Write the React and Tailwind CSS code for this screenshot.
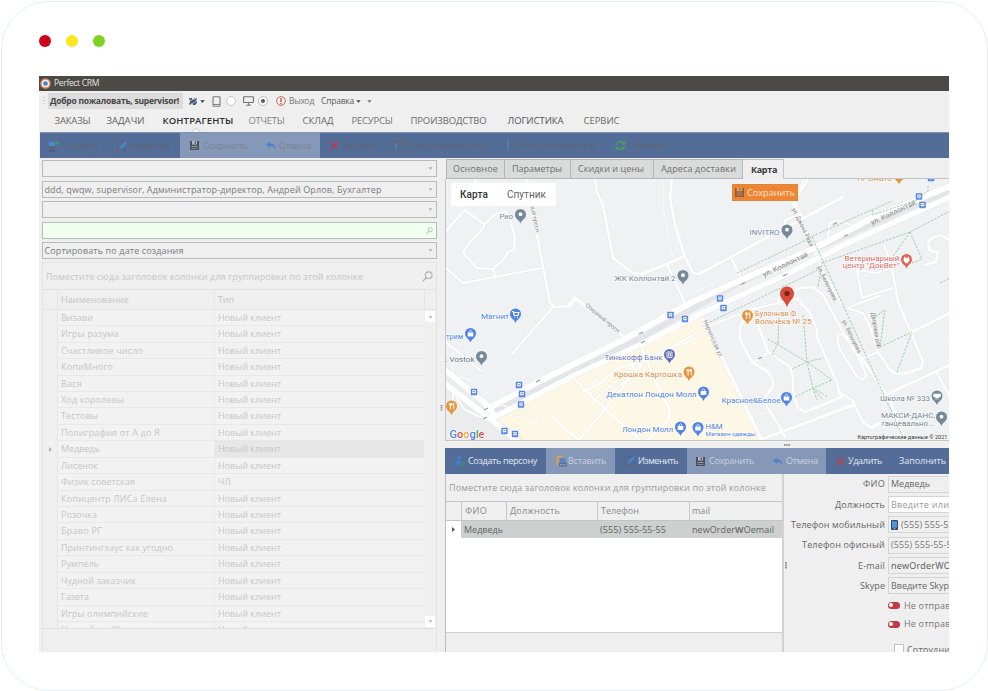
import React, { useLayoutEffect, useRef } from "react";

/* Text run spread over an exact width. */
function T({ w, className = "", children }) {
  const ref = useRef(null);
  useLayoutEffect(() => {
    const el = ref.current;
    el.style.letterSpacing = "0px";
    const natural = el.getBoundingClientRect().width;
    const n = el.textContent.length;
    if (w && n) el.style.letterSpacing = (w - natural) / n + "px";
  }, [w, children]);
  return (
    <span ref={ref} className={"inline-block shrink-0 whitespace-pre " + className}>
      {children}
    </span>
  );
}

/* ---------- icons ---------- */
const Save = ({ c = "#4c4f55" }) => (
  <svg className="h-[11px] w-[11px] shrink-0" viewBox="0 0 11 11">
    <path d="M1 1h9v9H1z" fill={c} />
    <path d="M3 1h5v3.600H3z" fill="#aeb7c6" />
    <path d="M5.600 1.500h1.300v2.300H5.600z" fill={c} />
    <path d="M2.400 6h6.200v.9H2.400zM2.400 8h6.200v.8H2.400z" fill="#8f9bb0" />
  </svg>
);
const Undo = () => (
  <svg className="h-[9px] w-[10px] shrink-0" viewBox="0 0 10 9">
    <path d="M0 3.600 4 .5v2c3.600 0 5.500 1.800 5.500 5.500C8.200 6 6.800 5 4 5v2z" fill="#4b83cc" />
  </svg>
);
const Cross = () => (
  <svg className="h-[9px] w-[9px] shrink-0" viewBox="0 0 9 9">
    <path d="M1 1l7 7M8 1L1 8" stroke="#bd3b4a" strokeWidth="1.500" />
  </svg>
);
const Edit = () => (
  <svg className="h-[12px] w-[12px] shrink-0" viewBox="0 0 12 12">
    <path d="M9.500 7v3.500h-8v-9h6" fill="none" stroke="#5d6470" strokeWidth="1" />
    <path d="M4 8.800l.6-2.200L9.400 1.600l1.500 1.500L6.200 8.100z" fill="#3f8bd8" />
  </svg>
);
const Create = () => (
  <svg className="h-[12px] w-[12px] shrink-0" viewBox="0 0 12 12">
    <path d="M1 2h6v4H1z" fill="#4a8bd0" />
    <path d="M1 6h6.500v3.500H1z" fill="#5c6678" />
    <path d="M2 10.800h2M5 10.800h2" stroke="#3b4352" />
    <path d="M9.500 1v4M7.500 3h4" stroke="#3f9a62" strokeWidth="2" />
  </svg>
);
const Person = () => (
  <svg className="h-[12px] w-[12px] shrink-0" viewBox="0 0 12 12">
    <circle cx="5" cy="3" r="2.200" fill="#3f7fc9" />
    <path d="M.5 10c0-3 2-4.300 4.500-4.300 1.600 0 2.500.5 3.200 1.300L6 10z" fill="#3f7fc9" />
    <circle cx="8.800" cy="9" r="2" fill="none" stroke="#3f8a62" strokeWidth="1.200" />
  </svg>
);
const Legal = () => (
  <svg className="h-[11px] w-[12px] shrink-0" viewBox="0 0 12 11">
    <path d="M.5.500h11v10H.5z" fill="none" stroke="#606773" />
    <path d="M1 2.500h10M5.500 1v9" stroke="#606773" />
    <path d="M3 3.500v6" stroke="#4a90d8" strokeWidth="1.500" strokeDasharray="1.500 .8" />
  </svg>
);
const Types = () => (
  <svg className="h-[11px] w-[11px] shrink-0" viewBox="0 0 11 11">
    <path d="M3 .5v10" stroke="#4a90d8" strokeWidth="1.500" strokeDasharray="2 1" />
    <path d="M5.500 1.500h5M5.500 4.500h5M5.500 7.500h5M5.500 10h5M.5.500v10" stroke="#606876" />
  </svg>
);
const Refresh = () => (
  <svg className="h-[11px] w-[11px] shrink-0" viewBox="0 0 11 11">
    <path d="M1.500 5A4 4 0 0 1 8.500 3M9.500 6A4 4 0 0 1 2.500 8" fill="none" stroke="#4a9c66" strokeWidth="1.800" />
    <path d="M10.500 0v4.500H6zM.5 11V6.500H5z" fill="#4a9c66" />
  </svg>
);
const Paste = () => (
  <svg className="h-[12px] w-[11px] shrink-0" viewBox="0 0 11 12">
    <path d="M.5 1.500h2v9h-2z" fill="#e09a48" />
    <path d="M1.500.5h5v1.800h-5z" fill="#e0a25c" />
    <path d="M4 3h4l2 2v3H4z" fill="#5d82bd" />
    <path d="M3 8h8v3.500H3z" fill="#5a6d94" />
    <path d="M4 9.700h6" stroke="#9fb0cc" strokeDasharray="1.500 .7" />
  </svg>
);
const Lens = ({ className }) => (
  <svg className={className} viewBox="0 0 11 11">
    <circle cx="6.700" cy="4.200" r="3.300" fill="none" stroke="currentColor" strokeWidth="1.200" />
    <path d="M4.300 6.700L.8 10.200" stroke="currentColor" strokeWidth="1.500" />
  </svg>
);
const Down = ({ className = "text-[#b3b3b3]" }) => (
  <svg className={"h-[3px] w-[5px] shrink-0 " + className} viewBox="0 0 5 3">
    <path d="M.3.300h4.400L2.500 2.700z" fill="currentColor" />
  </svg>
);

/* ---------- header ---------- */
function TopRows() {
  const tabs = [
    ["ЗАКАЗЫ", 36, "w-[52px]", "text-[#696969]"],
    ["ЗАДАЧИ", 38, "w-[56px]", "text-[#5f5f5f]"],
    ["КОНТРАГЕНТЫ", 71, "w-[86px]", "font-semibold text-[#303030]"],
    ["ОТЧЕТЫ", 36, "w-[54px]", "text-[#828282]"],
    ["СКЛАД", 31, "w-[49px]", "text-[#696969]"],
    ["РЕСУРСЫ", 41, "w-[59px]", "text-[#747474]"],
    ["ПРОИЗВОДСТВО", 76, "w-[97px]", "text-[#6a6a6a]"],
    ["ЛОГИСТИКА", 56, "w-[76px]", "text-[#555]"],
    ["СЕРВИС", 36, "w-[40px]", "text-[#696969]"],
  ];
  return (
    <>
      <div className="flex h-[15px] shrink-0 items-center bg-[#4b4a47] pb-[1px] pl-[1px] text-[8.5px] text-[#e6e6e6]">
        <svg className="mr-[3px] h-[11px] w-[11px]" viewBox="0 0 11 11">
          <circle cx="5.500" cy="5.500" r="5.300" fill="#df8750" />
          <circle cx="5.500" cy="5.500" r="3.800" fill="#f3f0f4" />
          <circle cx="5.500" cy="5.500" r="2.300" fill="#427fce" />
        </svg>
        <T w={45}>Perfect CRM</T>
      </div>
      <div className="flex h-[20px] shrink-0 items-center pl-[4px] text-[8.5px] text-[#5c5c5c]">
        <svg className="mr-[3px] h-[9px] w-[2px]" viewBox="0 0 2 9">
          <path d="M1 0v9" stroke="#aaa" strokeDasharray="1 2" />
        </svg>
        <div className="flex h-[16px] w-[135px] items-center bg-[#dcdcdc] pl-[2px] font-bold text-[#444]">
          <T w={129}>Добро пожаловать, supervisor!</T>
        </div>
        <svg className="ml-[5px] h-[9px] w-[10px]" viewBox="0 0 11 10">
          <path d="M1 1h3l1.500 2L7 1.500h3L9 4l1 2.500-2 2.500H5.500l-1-2-1.500 1.500-2-.500L2.500 5z" fill="#405875" />
          <path d="M1 4l8-2M3 8l6-3" stroke="#d9e3ea" strokeWidth=".7" />
        </svg>
        <Down className="ml-[2px] text-[#333]" />
        <svg className="ml-[7px] h-[11px] w-[9px]" viewBox="0 0 9 11">
          <rect x="1" y=".8" width="7" height="9.400" rx=".8" fill="none" stroke="#777" strokeWidth="1.100" />
          <path d="M1 8.500h7" stroke="#777" strokeWidth=".9" />
        </svg>
        <span className="ml-[5px] h-[10px] w-[10px] rounded-full border border-[#c6c6c6] bg-white" />
        <svg className="ml-[7px] h-[10px] w-[11px]" viewBox="0 0 11 10">
          <rect x=".6" y=".8" width="9.800" height="5.700" rx=".5" fill="none" stroke="#707070" strokeWidth="1.100" />
          <path d="M5.500 6.500v2.500M3 9.200h5" stroke="#777" />
        </svg>
        <span className="ml-[4px] flex h-[10px] w-[10px] items-center justify-center rounded-full border border-[#bbb] bg-white">
          <span className="h-[4px] w-[4px] rounded-full bg-[#555]" />
        </span>
        <svg className="ml-[8px] h-[10px] w-[10px]" viewBox="0 0 10 10">
          <circle cx="5" cy="5" r="4.300" fill="#fff2f0" stroke="#cf5c5c" strokeWidth="1" />
          <path d="M5 2v4M5 7v1.200" stroke="#cc4040" strokeWidth="1.300" />
        </svg>
        <T w={25} className="ml-[3px] text-[#777]">Выход</T>
        <T w={33} className="ml-[7px]">Справка</T>
        <Down className="ml-[2px] text-[#444]" />
        <Down className="ml-[6px] text-[#777]" />
      </div>
      <div className="relative flex h-[21px] shrink-0 items-center pl-[15.500px] text-[9.500px]">
        {tabs.map(([t, w, box, cls]) => (
          <div key={t} className={"flex shrink-0 " + box + " " + cls}>
            <T w={w}>{t}</T>
          </div>
        ))}
        <svg className="absolute bottom-0 left-[152px] h-[5px] w-[10px]" viewBox="0 0 10 5">
          <path d="M.5 5L5 .7 9.500 5" fill="#f6f6f6" stroke="#c3c3c3" strokeWidth=".8" />
        </svg>
      </div>
    </>
  );
}

function MainToolbar() {
  return (
    <div className="ml-[1px] flex h-[26px] shrink-0 border-t border-[#8493b0] bg-[#536c98] text-[9px] text-[#5f6774]">
      <div className="flex w-[140px] items-center pl-[8px]">
        <Create /><T w={36} className="ml-[3px]">Создать</T>
        <div className="w-[17px]" />
        <Edit /><T w={40} className="ml-[2px]">Изменить</T>
      </div>
      <div className="flex w-[140px] items-center bg-[#8698b8] pl-[9px] text-[#7b8595]">
        <Save /><T w={44} className="ml-[3px]">Сохранить</T>
        <div className="w-[19px]" />
        <Undo /><T w={32} className="ml-[3px]">Отмена</T>
      </div>
      <div className="flex items-center pl-[10px]">
        <Cross /><T w={33} className="ml-[4px]">Удалить</T>
        <div className="w-[17px]" />
        <Legal /><T w={80} className="ml-[2px]">Юридические лица</T>
        <div className="w-[18px]" />
        <Types /><T w={78} className="ml-[3px]">Типы контрагентов</T>
        <div className="w-[18px]" />
        <Refresh /><T w={39} className="ml-[3px]">Обновить</T>
      </div>
    </div>
  );
}

/* ---------- left panel ---------- */
const CLIENTS = [
  ["Визави", 32], ["Игры разума", 58], ["Счастливое число", 82], ["КопиМного", 52], ["Вася", 21],
  ["Ход королевы", 63], ["Тестовы", 37], ["Полиграфия от А до Я", 99], ["Медведь", 39], ["Лисенок", 37],
  ["Физик советская", 74], ["Копицентр ЛИСа Елена", 106], ["Розочка", 36], ["Браво РГ", 41],
  ["Принтингхаус как угодно", 112], ["Румпель", 38], ["Чудной заказчик", 75], ["Газета", 28],
  ["Игры олимпийские", 87], ["Новая база Юг", 63],
];

function Field({ text, w, green }) {
  return (
    <div className={"flex h-[17px] w-[395px] items-center border border-[#b9bbba] pl-[1.500px] pr-[3px] " + (green ? "bg-[#f1fff0]" : "bg-[#efefef]")}>
      {text && <T w={w} className="text-[9px] text-[#7b7b7b]">{text}</T>}
      <span className="flex-1" />
      {green ? <Lens className="h-[7px] w-[7px] text-[#aab5aa]" /> : <Down />}
    </div>
  );
}

function LeftPanel() {
  return (
    <div className="flex w-[398px] shrink-0 flex-col pl-[3px] pt-[2.400px]">
      <div className="flex flex-col gap-[3.400px]">
        <Field />
        <Field text="ddd, qwqw, supervisor, Администратор-директор, Андрей Орлов, Бухгалтер" w={337} />
        <Field />
        <Field green />
        <Field text="Сортировать по дате создания" w={139} />
      </div>
      <div className="mt-[3px] flex min-h-0 flex-1 flex-col border-x border-t border-[#e4e4e4] text-[9px] text-[#c6c6c6]">
        <div className="flex h-[27px] shrink-0 items-center justify-between border-b border-[#e2e2e2] pl-[3px] pr-[3px] pt-[1px]">
          <T w={317}>Поместите сюда заголовок колонки для группировки по этой колонке</T>
          <Lens className="h-[11px] w-[11px] text-[#b4b4b4]" />
        </div>
        <div className="flex h-[20px] shrink-0 border-b border-[#e4e4e4]">
          <div className="w-[15px] border-r border-[#e4e4e4]" />
          <div className="flex w-[157px] items-center border-r border-[#e4e4e4] pl-[3px]"><T w={68}>Наименование</T></div>
          <div className="flex w-[210px] items-center border-r border-[#e4e4e4] pl-[3px]"><T w={16}>Тип</T></div>
        </div>
        <div className="flex h-[319px] shrink-0 overflow-hidden border-b border-[#e0e0e0]">
          <div className="w-[381px] overflow-hidden">
            {CLIENTS.map(([name, w], i) => (
              <div key={name} className="flex h-[16.430px] w-full">
                <div className="flex w-[15px] shrink-0 items-center justify-center border-r border-[#e6e6e6]">
                  {i === 8 && (
                    <svg className="h-[5px] w-[3px]" viewBox="0 0 3 5"><path d="M0 0l3 2.500L0 5z" fill="#b0b0b0" /></svg>
                  )}
                </div>
                <div className="flex w-[157px] shrink-0 items-center border-b border-r border-[#e8e8e8] bg-[#f2f2f2] pl-[3px]"><T w={w}>{name}</T></div>
                <div className={"flex w-[209px] shrink-0 items-center border-b border-[#e8e8e8] pl-[3px] " + (i === 8 ? "bg-[#e7e7e7]" : "bg-[#f2f2f2]")}>
                  <T w={i === 10 ? 13 : 63}>{i === 10 ? "ЧЛ" : "Новый клиент"}</T>
                </div>
              </div>
            ))}
          </div>
          <div className="flex flex-1 flex-col items-center justify-between pb-[1px] pt-[1px]">
            <span className="flex h-[11px] w-[10px] items-center justify-center bg-white"><Down className="rotate-180 text-[#bbb]" /></span>
            <span className="flex h-[11px] w-[10px] items-center justify-center bg-white"><Down className="text-[#bbb]" /></span>
          </div>
        </div>
      </div>
    </div>
  );
}

/* ---------- map ---------- */
const ROADS = [
  ["446,231 465,210 484,224 484,227", 2.2],
  ["484,225 495,214 505,211.500 510,217 512,227 515,238 514,250 508,252 503,260 493,269 477,268 463,253 467,246 484,227", 2.2],
  ["493,269 495,276", 2.2],
  ["446,268 463,283 542,268", 2.2],
  ["475,179 476,187", 2.2],
  ["527,179 537,235 550,303 555,307 570,306 575,299 625,338", 2.4],
  ["568,305 575,297 588,308", 2],
  ["553,307 513,353", 2.2],
  ["595,179 597,192 603,205 613,258 633,273 642,274 667,264 685,256", 2.6],
  ["672,179 670,198 675,225 685,257 693,273 699,274 787,227 843,197", 2.6],
  ["663,179 663,208 673,258", 1],
  ["667,264 687,308", 2.2],
  ["683,298 730,275", 1],
  ["808,179 800,192 792,202 815,250 823,272 842,305", 2.6],
  ["804,179 799,190", 1.6],
  ["793,199 802,217", 2.2],
  ["786,232 785,220 801,214", 2.2],
  ["732,260 743,283", 2.6],
  ["828,237 830,223 840,220 858,228 832,237", 2.2],
  ["949,240 941,235 933,237 928,242 930,251 938,252 936,262 924,265", 2.6],
  ["857,270 877,273 892,268 884,245", 2.2],
  ["892,268 898,302 910,330 923,362 921,368 907,373 896,374 890,370 878,352 863,358", 2.4],
  ["857,270 862,298 892,288", 2.2],
  ["780,305 778,298 800,288 813,287 823,295 847,340 863,360 890,400 905,440", 2.6],
  ["703,320 733,380 762,441", 3.6],
  ["704,328 753,309 800,298", 2.2],
  ["750,310 740,327 740,340 753,363 767,371 773,380 773,387 765,397 767,407 780,427 785,437", 2.6],
  ["768,352 753,363", 2.2],
  ["758,325 768,352 790,367 793,377 793,390 797,407 805,412 842,397 838,392", 2.6],
  ["798,300 810,313 817,330 817,337 837,383 840,393 852,400 863,422 871,428 882,422", 2.6],
  ["853,405 760,440", 3],
  ["837,337 840,350 856,375 862,380 866,376 863,366 847,337 841,334 837,337", 2.2],
  ["878,352 870,327 863,313 847,308 879,296", 2.2],
  ["887,394 950,365", 2.6],
  ["937,373 950,397", 2.2],
  ["912,332 950,313", 2.6],
  ["929,325 937,337 950,341", 1],
  ["905,372 936,330", 0.8],
  ["733,372 746,366", 1.2],
  ["755,417 767,412", 1],
  ["446,342 481,371", 2.2],
  ["453,352 453,376 473,380", 1.3],
  ["454,394 465,410 487,420 500,430", 1.8],
  ["453,389 453,405", 1.8],
];
const YELLOW_ROADS = [
  ["573,378 605,409 641,441", 2.6],
  ["553,418 579,440 605,409 641,365", 2.6],
  ["583,391 596,386 618,368 634,364 640,364 697,333", 2.4],
  ["584,391 594,386 596,378", 2.2],
  ["595,399 634,366", 2.2],
  ["600,404 641,367", 2.2],
  ["640,345 652,373 670,410 668,420 648,441", 3],
  ["640,360 698,338", 1.5],
  ["502,405 541,418", 1],
  ["505,415 535,418", 1],
];
const HIGHWAYS = [
  ["487,409 540,381 623,340 690,303 743,279 815,248 870,219 950,186", 6],
  ["497,416 573,376 640,345 700,314 783,276 850,242 950,197", 5.5],
  ["444,369 487,405 495,417", 6],
  ["444,383 497,424 518,441", 6],
];
const WALKS = [
  "737,273 800,243 815,235 892,201", "872,210 873,215 917,200 928,191 928,186", "950,211 910,232 822,263 818,287",
  "910,232 892,258", "910,232 922,259 912,263", "812,237 843,305 903,437", "710,322 818,270", "940,283 950,278",
  "778,343 779,317", "768,339 807,362 823,358", "803,315 807,362 813,388 832,380 807,362 792,369",
  "795,397 813,388 828,397", "813,388 817,400", "813,388 823,400", "778,343 772,355",
  "875,317 885,310 880,347 912,332 897,372",
];

function Pin({ x, y, c, kind }) {
  return (
    <g transform={`translate(${x} ${y})`}>
      <path d="M0 8.500C-.8 5-5.500 3.800-5.500-.6A5.500 5.500 0 0 1 5.500-.6C5.500 3.800.8 5 0 8.500z" fill={c} />
      {kind === "food" && <path d="M-2-3.500v2.200h2.200v-2.200M-.9-3.500V3M2.300-3.500V3M1.800-3.500v3" stroke="#fff" strokeWidth=".9" fill="none" />}
      {kind === "bag" && <><path d="M-2.800-1.500h5.600V2.500h-5.600z" fill="#fff" /><path d="M-1.300-1.500c0-3 2.600-3 2.600 0" fill="none" stroke="#fff" strokeWidth=".8" /></>}
      {kind === "cart" && <path d="M-3.500-3h1.300L-1.300 1H2.500L3.300-2h-5M-1 2.800h.8M1.700 2.800h.8" fill="none" stroke="#fff" strokeWidth="1.200" />}
      {kind === "bank" && <path d="M-2.500-3h5v5.500h-5zM-1-1.500h2V1h-2z" fill="none" stroke="#fff" strokeWidth=".8" />}
      {kind === "vet" && <path d="M-2.500-2h5v3L1 2.800h-2L-2.500 1zM-2-3.500V-2M2-3.500V-2" fill="#fff" stroke="#fff" strokeWidth=".7" />}
      {kind === "school" && <path d="M-3.500-2.500h7V0L0 1.500-3.500 0zM-2 2.500h4" fill="#fff" stroke="#fff" strokeWidth=".5" />}
      {!kind && <circle cy="-.8" r="1.900" fill="#fff" />}
    </g>
  );
}

const STOPS = [[720, 298.500], [723.500, 308], [670.500, 315], [685, 319], [919, 196.500], [922.500, 205], [931, 178], [519, 385], [522, 394], [521, 404.500], [474, 392], [504.500, 431], [515, 434]];

const PINS = [
  [520.500, 215, "#748a9c"], [787, 230.500, "#748a9c"], [683, 276, "#748a9c"], [481.500, 357, "#748a9c"],
  [515.500, 314.500, "#4e83ea", "cart"], [470.500, 334, "#4e83ea", "bag"], [669.500, 355, "#5e70be", "bank"],
  [689, 372.500, "#e8943c", "food"], [451.500, 406.500, "#e8943c", "food"], [747.500, 316, "#e8943c", "food"],
  [899, 176, "#e8943c", "food"], [703.500, 392.500, "#4e83ea", "bag"], [786.500, 398, "#4e83ea", "bag"],
  [680.500, 427.500, "#4e83ea", "bag"], [698, 428, "#4e83ea", "bag"], [906.500, 260, "#dd6357", "vet"],
  [937, 396.500, "#748a9c", "school"], [941.500, 417.500, "#748a9c"],
];

/* x, baseline, width, colour, text, size, rotation */
const LABELS = [
  [499.500, 218.500, 13.500, "#71879a", "Рио", 7], [749.500, 234.500, 30, "#71879a", "INVITRO", 7],
  [614.500, 280.500, 61, "#71879a", "ЖК Коллонтай 2", 7], [449.500, 361.500, 25, "#60717c", "Vostok", 7],
  [445.500, 361.500, 2, "#60717c", ":", 7],
  [481, 318.500, 28, "#4b7fe0", "Магнит", 7], [446, 338.500, 17, "#4b7fe0", "трим", 7],
  [604.500, 359.500, 58, "#6577bd", "Тинькофф Банк", 7], [614, 377, 68, "#d98a46", "Крошка Картошка", 7],
  [606.500, 397, 90, "#4b7fe0", "Декатлон Лондон Молл", 7], [721.500, 402.500, 59, "#4b7fe0", "Красное&Белое", 7],
  [622, 431.500, 51, "#4b7fe0", "Лондон Молл", 7], [705.500, 428.500, 17, "#4b7fe0", "H&M", 7],
  [705.500, 435.500, 50, "#4b7fe0", "Магазин одежды", 6], [755, 316, 43, "#d98a46", "Булочная Ф.", 7],
  [755, 324, 56.500, "#d98a46", "Вольчека № 25", 7], [844.500, 260.500, 55, "#dc6a5f", "Ветеринарный", 7],
  [842.500, 268, 57, "#dc6a5f", "центр \"ДокВет\"", 7], [857, 180.500, 35, "#d98a46", "ПРОАвто", 7],
  [880, 400.500, 50, "#71838f", "Школа № 333", 7], [881, 417.500, 54, "#71838f", "МАКСИ-ДАНС,", 7],
  [881, 425.500, 53, "#71838f", "танцевально...", 7],
  [764, 277, 49, "#858585", "ул. Коллонтай", 7, -25], [872, 225, 49, "#858585", "ул. Коллонтай", 7, -25],
  [792, 209, 42, "#858585", "ул. Джона Рида", 6, 64], [817, 267, 38, "#858585", "ул. Бельчуева", 6, 64],
  [842, 321, 36, "#858585", "ул. Бельчуева", 6, 64], [585, 306, 44, "#8a8a8a", "Союзный просп.", 6, 40],
  [530.500, 205, 29, "#8a8a8a", "ный просп.", 5.500, 79], [703, 321, 41, "#8a8a8a", "Нерчинская ул.", 6, 66],
  [871, 313, 37, "#8a8a8a", "Дворовая дор.", 6, 80],
];

function Roads({ list, edge }) {
  return (
    <g fill="none" strokeLinejoin="round" strokeLinecap="round">
      {list.map(([p, w], i) => <polyline key={"e" + i} points={p} stroke={edge} strokeWidth={w + 0.9} />)}
      {list.map(([p, w], i) => <polyline key={i} points={p} stroke="#fff" strokeWidth={w} />)}
    </g>
  );
}

function MapView() {
  return (
    <div className="relative h-[262px] shrink-0 overflow-hidden border-b border-l border-[#c3c3c3]">
      <svg className="block h-[262px] w-[503px]" viewBox="446 179 503 262" fontFamily="Roboto, sans-serif">
        <rect x="446" y="179" width="503" height="262" fill="#f0f1f3" />
        <path d="M497 419L573 378 640 347 700 316 706 326 762 441H527z" fill="#fdf7e5" />
        <path d="M446 375L492 410 510 441H446z" fill="#ebecee" />
        <polyline points="490,412 631,343 743,281 815,249 950,190" fill="none" stroke="#e3e5e8" strokeWidth="6" />
        <Roads list={ROADS} edge="#e6e8eb" />
        <Roads list={YELLOW_ROADS} edge="#f0ebdc" />
        <Roads list={HIGHWAYS} edge="#e3e5e8" />
        <g fill="none" stroke="#9fd0ac" strokeWidth="1" strokeDasharray="2.500 1.300">
          {WALKS.map((p) => <polyline key={p} points={p} />)}
        </g>
        <g stroke="#8f9aac" strokeWidth="1.100">
          {[[538, 381], [641, 333], [643, 342], [743, 283.500], [785, 275], [846, 235.500], [835, 223.500], [760, 358], [486, 409], [485, 418]].map(([x, y]) => (
            <path key={x} d={`M${x - 2} ${y + 1}l4-2`} />
          ))}
        </g>
        {STOPS.map(([x, y]) => (
          <g key={x + "-" + y} transform={`translate(${x - 3.2} ${y - 3.2})`}>
            <rect width="6.400" height="6.400" rx=".8" fill="#5386e4" />
            <rect x="1.500" y="1.300" width="3.400" height="3" fill="#fff" />
            <path d="M1.800 5h.8M3.800 5h.8" stroke="#dbe7ff" strokeWidth=".8" />
            <path d="M2.200 2.700h2" stroke="#5386e4" strokeWidth=".8" />
          </g>
        ))}
        {LABELS.map(([x, y, w, c, t, s, r], i) => (
          <text key={i} fontSize={s} fill={c} textLength={w} lengthAdjust="spacingAndGlyphs"
            transform={`translate(${x} ${y}) rotate(${r || 0})`}
            stroke={r ? "none" : "#fff"} strokeWidth="1" paintOrder="stroke">{t}</text>
        ))}
        {PINS.map(([x, y, c, k], i) => <Pin key={i} x={x} y={y} c={c} kind={k} />)}
        <path d="M787 307.500c-1-6-7-8-7-14a7 7 0 0 1 14 0c0 6-6 8-7 14z" fill="#d94a3d" />
        <circle cx="787" cy="293.500" r="2.600" fill="#74211c" />
        <text x="449.500" y="437.500" fontSize="11" fontWeight="500" textLength="35" lengthAdjust="spacingAndGlyphs" stroke="#fff" strokeWidth="1.200" paintOrder="stroke">
          <tspan fill="#4c82e8">G</tspan><tspan fill="#df5047">o</tspan><tspan fill="#eab02c">o</tspan><tspan fill="#4c82e8">g</tspan><tspan fill="#3fa45b">l</tspan><tspan fill="#df5047">e</tspan>
        </text>
        <text x="857.500" y="439" fontSize="6" fill="#333" textLength="90" lengthAdjust="spacingAndGlyphs" stroke="#f4f4f4" strokeWidth="1" paintOrder="stroke">Картографические данные © 2021</text>
      </svg>
      <div className="absolute left-[5px] top-[4px] flex h-[23px] w-[105px] items-center bg-white pl-[9px] font-[Roboto] text-[10px]">
        <T w={28} className="font-medium text-[#333]">Карта</T>
        <T w={39} className="ml-[19px] text-[#666]">Спутник</T>
      </div>
      <div className="absolute left-[286px] top-[5px] flex h-[17px] w-[66px] items-center border border-[#e08638] bg-[#ef8432] pl-[2px] text-[9px] text-[#ffe9d6]">
        <svg className="h-[9px] w-[9px]" viewBox="0 0 9 9">
          <path d="M0 0h9v9H0z" fill="#8a5f3d" />
          <path d="M2 0h5v3H2zM1.500 5h6M1.500 7h6" fill="#ef9a58" stroke="#efa56b" strokeWidth=".6" />
          <path d="M4.300 0h1.200v2.300H4.300z" fill="#8a5f3d" />
        </svg>
        <T w={48} className="ml-[3px]">Сохранить</T>
      </div>
    </div>
  );
}

/* ---------- right panel ---------- */
function RightTabs() {
  const tabs = [
    ["Основное", 45, "w-[59px] border-l pl-[6px]"], ["Параметры", 50, "w-[66px] pl-[7px]"],
    ["Скидки и цены", 66, "w-[83px] pl-[7px]"], ["Адреса доставки", 75, "w-[89px] pl-[7px]"],
  ];
  return (
    <div className="flex h-[21px] shrink-0 pl-[1px] pt-[1px] text-[9px] text-[#6f6f6f]">
      {tabs.map(([t, w, c]) => (
        <div key={t} className={"flex shrink-0 items-center border-b border-r border-t border-[#b5b5b5] bg-[#d9dada] " + c}>
          <T w={w}>{t}</T>
        </div>
      ))}
      <div className="flex w-[41px] shrink-0 items-center border-r border-t border-[#c4c4c4] pl-[8px] font-bold text-[#3b3b3b]"><T w={26}>Карта</T></div>
      <div className="flex-1 border-b border-[#c4c4c4]" />
    </div>
  );
}

function PersonToolbar() {
  return (
    <div className="flex h-[26px] shrink-0 overflow-hidden bg-[#536c98] text-[9px] text-[#e3e8f1]">
      <div className="flex w-[101px] shrink-0 items-center pl-[9px]"><Person /><T w={69} className="ml-[2px]">Создать персону</T></div>
      <div className="flex w-[69px] shrink-0 items-center bg-[#8698b8] pl-[10px] text-[#c9d1df]"><Paste /><T w={38} className="ml-[1px]">Вставить</T></div>
      <div className="flex w-[72px] shrink-0 items-center pl-[9px]"><Edit /><T w={40} className="ml-[2px]">Изменить</T></div>
      <div className="flex w-[139px] shrink-0 items-center bg-[#8698b8] pl-[8px] text-[#c9d1df]">
        <Save /><T w={45} className="ml-[3px]">Сохранить</T>
        <div className="w-[19px]" />
        <Undo /><T w={32} className="ml-[3px]">Отмена</T>
      </div>
      <div className="flex shrink-0 items-center pl-[10px]"><Cross /><T w={34} className="ml-[3px]">Удалить</T><T w={47} className="ml-[17px]">Заполнить</T></div>
    </div>
  );
}

function PersonGrid() {
  return (
    <div className="flex w-[339px] shrink-0 flex-col border-l border-r-2 border-l-[#bdbdbd] border-r-[#d2d2d2] text-[9px] text-[#8a8a8a]">
      <div className="flex h-[27px] shrink-0 items-center pl-[3px] pt-[1px] text-[#9b9b9b]"><T w={317}>Поместите сюда заголовок колонки для группировки по этой колонке</T></div>
      <div className="flex h-[20px] shrink-0 border-y border-[#c5c5c5]">
        <div className="w-[16px] border-r border-[#c9c9c9]" />
        <div className="flex w-[45px] items-center border-r border-[#c9c9c9] pl-[3px]"><T w={22}>ФИО</T></div>
        <div className="flex w-[91px] items-center border-r border-[#c9c9c9] pl-[3px]"><T w={50}>Должность</T></div>
        <div className="flex w-[92px] items-center border-r border-[#c9c9c9] pl-[3px]"><T w={38}>Телефон</T></div>
        <div className="flex items-center pl-[2px]"><T w={18}>mail</T></div>
      </div>
      <div className="flex h-[112px] shrink-0 flex-col border-b border-[#cfcfcf] bg-white">
        <div className="flex h-[17px] text-[#636363]">
          <div className="flex w-[15px] items-center justify-center">
            <svg className="h-[5px] w-[3px]" viewBox="0 0 3 5"><path d="M0 0l3 2.500L0 5z" fill="#555" /></svg>
          </div>
          <div className="flex flex-1 items-center bg-[#cecfcf]">
            <div className="w-[139px] pl-[3px] leading-[16px]"><T w={39}>Медведь</T></div>
            <div className="w-[92px] leading-[16px]"><T w={66}>(555) 555-55-55</T></div>
            <T w={82}>newOrder<span className="font-semibold">W</span>Oemail</T>
          </div>
        </div>
      </div>
    </div>
  );
}

function PersonForm() {
  const rows = [
    ["ФИО", 22, "Медведь", 39, "text-[#666]"],
    ["Должность", 50, "Введите или выберите", 106, "bg-white text-[#999]"],
    ["Телефон мобильный", 94, "(555) 555-55-55", 66, "text-[#777]"],
    ["Телефон офисный", 83, "(555) 555-55-55", 66, "text-[#777]"],
    ["E-mail", 27, "newOrderWOemail", 84, "text-[#555]"],
    ["Skype", 25, "Введите Skype", 63, "text-[#666]"],
  ];
  return (
    <div className="flex min-w-0 flex-1 overflow-hidden text-[9px] text-[#666]">
      <div className="flex w-[4px] shrink-0 items-start justify-center pt-[88px]">
        <svg className="h-[7px] w-[2px]" viewBox="0 0 2 7"><path d="M1 0v7" stroke="#777" strokeWidth="1.500" strokeDasharray="1.500 .7" /></svg>
      </div>
      <div className="min-w-0 flex-1">
        {rows.map(([l, lw, v, vw, c], i) => (
          <div key={l} className="flex h-[20.350px] items-center">
            <div className="flex w-[97px] shrink-0 justify-end"><T w={lw}>{l}</T></div>
            <div className={"ml-[3px] flex h-[17px] w-[140px] shrink-0 items-center border border-[#d4d4d4] pl-[2px] " + c}>
              {i === 2 && (
                <svg className="mr-[3px] h-[10px] w-[7px] shrink-0" viewBox="0 0 7 10">
                  <rect width="7" height="10" rx="1" fill="#34466f" />
                  <path d="M1 1.200h5v6.500H1z" fill="#5293df" />
                  <path d="M2.500 8.800h2" stroke="#c9d6ea" strokeWidth=".8" />
                </svg>
              )}
              <T w={vw}>{v}</T>
            </div>
          </div>
        ))}
        {[0, 1].map((i) => (
          <div key={i} className="flex h-[18.700px] items-center pl-[100px]">
            <span className="flex h-[7px] w-[12px] shrink-0 items-center rounded-full bg-[#c23a45] pl-[1px]"><span className="h-[4px] w-[4px] rounded-full bg-white" /></span>
            <T w={67} className="ml-[4px] text-[#777]">Не отправлять</T>
          </div>
        ))}
        <div className="mt-[8px] flex h-[16px] items-center pl-[106px]">
          <span className="h-[10px] w-[10px] shrink-0 border border-[#c2c2c2] bg-white" />
          <T w={48} className="ml-[3px]">Сотрудник</T>
        </div>
      </div>
    </div>
  );
}

export default function App() {
  return (
    <div className="h-[691px] w-[988px] overflow-hidden bg-white pl-[1px] pt-[1px] font-['Open_Sans',sans-serif]">
      <div className="flex h-[690px] w-[987px] flex-col rounded-[48px] border border-[#e5eef7] pl-[37px] pt-[33px]">
        <div className="flex h-[12px] shrink-0 gap-[15px]">
          <span className="h-[12px] w-[12px] rounded-full bg-[#d0021b]" />
          <span className="h-[12px] w-[12px] rounded-full bg-[#f8e71c]" />
          <span className="h-[12px] w-[12px] rounded-full bg-[#7ed321]" />
        </div>
        <div className="mt-[29px] flex h-[576px] w-[910px] shrink-0 flex-col overflow-hidden bg-[#efefef]">
          <TopRows />
          <MainToolbar />
          <div className="flex min-h-0 flex-1">
            <LeftPanel />
            <div className="flex w-[8px] shrink-0 items-start justify-center pt-[247px]">
              <svg className="h-[6px] w-[3px]" viewBox="0 0 3 6"><path d="M1.500 0v6" stroke="#888" strokeWidth="2" strokeDasharray="1.200 1" /></svg>
            </div>
            <div className="flex min-w-0 flex-1 flex-col">
              <RightTabs />
              <MapView />
              <div className="flex h-[7px] shrink-0 items-center pl-[339px]">
                <svg className="h-[2px] w-[6px]" viewBox="0 0 6 2"><path d="M0 1h6" stroke="#777" strokeWidth="1.500" strokeDasharray="1.500 .7" /></svg>
              </div>
              <PersonToolbar />
              <div className="flex min-h-0 flex-1"><PersonGrid /><PersonForm /></div>
            </div>
          </div>
        </div>
      </div>
    </div>
  );
}
